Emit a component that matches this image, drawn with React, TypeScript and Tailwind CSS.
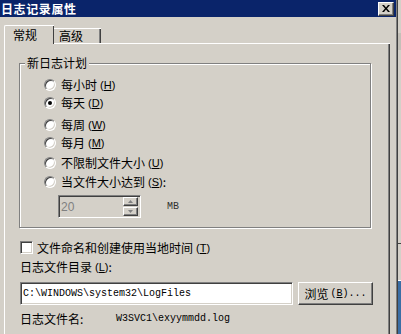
import type { FC, ReactNode } from 'react'

const cjk = { fontFamily: '"Noto Sans CJK SC", "Liberation Sans", sans-serif' }
const mono = { fontFamily: '"Liberation Mono", "Noto Sans CJK SC", monospace' }
const sans = { fontFamily: '"Liberation Sans", sans-serif' }

const Key: FC<{ k: string }> = ({ k }) => (
  <span style={sans} className="text-[11px]">
    (<span className="underline underline-offset-1">{k}</span>)
  </span>
)

const Radio: FC<{ checked?: boolean; children: ReactNode; className?: string }> = ({ checked, children, className }) => (
  <div className={`flex h-[18px] items-center ${className ?? ''}`}>
    <span className="flex h-[12px] w-[12px] items-center justify-center rounded-full border border-b-white border-l-[#808080] border-r-white border-t-[#808080] bg-white shadow-[inset_1px_1px_0_#404040,inset_-1px_-1px_0_#d4d0c8]">
      {checked && <span className="h-[4px] w-[4px] rounded-full bg-black" />}
    </span>
    <span className="ml-[5px] flex items-center gap-[3px] text-[12px] leading-[14px] text-black">{children}</span>
  </div>
)

const App: FC = () => {
  return (
    <div className="flex h-[334px] w-[401px] overflow-hidden bg-[#d4d0c8]" style={cjk}>
      <div className="flex w-[396px] shrink-0 flex-col">
        {/* title bar */}
        <div className="flex h-[17px] items-center justify-between bg-[#0a246a] pl-[1px] pr-[2px]">
          <span className="text-[12px] font-bold leading-[14px] tracking-[0.6px] text-white">日志记录属性</span>
          <div className="flex h-[14px] w-[16px] items-center justify-center border border-b-[#404040] border-l-white border-r-[#404040] border-t-white bg-[#d4d0c8] shadow-[inset_-1px_-1px_0_#808080]">
            <svg width="8" height="7" viewBox="0 0 8 7">
              <path d="M0 0h2l2 2.5 2-2.5h2l-3 3.5 3 3.5h-2l-2-2.5-2 2.5h-2l3-3.5z" fill="#000" />
            </svg>
          </div>
        </div>

        {/* tabs */}
        <div className="ml-[4px] mt-[8px] flex items-end">
          <div className="relative z-10 -mb-px flex h-[19px] w-[50px] items-start rounded-tl-[2px] border-l border-t border-white bg-[#d4d0c8] pl-[8px] pt-[2px] shadow-[inset_-1px_0_0_#404040]">
            <span className="text-[12px] leading-[14px]">常规</span>
          </div>
          <div className="flex h-[15px] w-[47px] items-start border-t border-white pl-[5px] shadow-[inset_-1px_0_0_#404040,inset_-2px_0_0_#808080]">
            <span className="text-[12px] leading-[14px]">高级</span>
          </div>
        </div>

        {/* panel */}
        <div className="ml-[4px] flex w-[386px] flex-1 flex-col border-l border-t border-white pl-[14px] shadow-[inset_-1px_0_0_#404040,inset_-2px_0_0_#808080]">
          <div className="relative mt-[19px] flex h-[165px] w-[352px] flex-col border border-[#808080] pl-[24px] pt-[12px] shadow-[inset_1px_1px_0_#fff,1px_1px_0_#fff]">
            <span className="absolute left-[5px] top-[-8px] bg-[#d4d0c8] px-[2px] text-[12px] leading-[14px]">新日志计划</span>
            <Radio>每小时 <Key k="H" /></Radio>
            <Radio checked>每天 <Key k="D" /></Radio>
            <Radio className="mt-[4px]">每周 <Key k="W" /></Radio>
            <Radio>每月 <Key k="M" /></Radio>
            <Radio className="mt-[2px]">不限制文件大小 <Key k="U" /></Radio>
            <Radio className="mt-[1px]">当文件大小达到 <span className="flex items-center"><Key k="S" />:</span></Radio>
            <div className="ml-[14px] mt-[4px] flex items-center">
              <div className="flex h-[23px] w-[83px] items-center border border-b-white border-l-[#808080] border-r-white border-t-[#808080] shadow-[inset_1px_1px_0_#404040,inset_-1px_-1px_0_#d4d0c8]">
                <span className="ml-[2px] flex-1 text-[12px] leading-[14px] text-[#808080]" style={sans}>
                  20
                </span>
                <div className="mr-[2px] flex flex-col gap-[1px]">
                  {['up', 'down'].map((d) => (
                    <div
                      key={d}
                      className="flex h-[9px] w-[15px] items-center justify-center border border-b-[#404040] border-l-white border-r-[#404040] border-t-white bg-[#d4d0c8] shadow-[inset_-1px_-1px_0_#808080]"
                    >
                      <svg width="5" height="3" viewBox="0 0 5 3">
                        <path d={d === 'up' ? 'M2.5 0L5 3H0z' : 'M0 0h5L2.5 3z'} fill="#808080" />
                      </svg>
                    </div>
                  ))}
                </div>
              </div>
              <span className="ml-[26px] text-[10px] leading-[12px] text-[#303030]" style={mono}>
                MB
              </span>
            </div>
          </div>

          <div className="ml-[1px] mt-[13px] flex h-[13px] items-center">
            <span className="h-[13px] w-[13px] border border-b-white border-l-[#808080] border-r-white border-t-[#808080] bg-white shadow-[inset_1px_1px_0_#404040,inset_-1px_-1px_0_#d4d0c8]" />
            <span className="ml-[4px] flex items-center gap-[3px] text-[12px] leading-[14px]">
              文件命名和创建使用当地时间 <Key k="T" />
            </span>
          </div>

          <div className="ml-[1px] mt-[6px] flex h-[14px] items-center gap-[3px] text-[12px] leading-[14px]">
            日志文件目录 <span className="flex items-center"><Key k="L" />:</span>
          </div>

          <div className="ml-[1px] mt-[8px] flex items-center gap-[5px]">
            <div className="flex h-[23px] w-[273px] items-center border border-b-white border-l-[#808080] border-r-white border-t-[#808080] bg-white pl-[2px] shadow-[inset_1px_1px_0_#404040,inset_-1px_-1px_0_#d4d0c8]">
              <span className="text-[10px] leading-[12px] text-black" style={mono}>
                C:\WINDOWS\system32\LogFiles
              </span>
            </div>
            <div className="flex h-[23px] w-[75px] items-center justify-center gap-[2px] border border-b-[#404040] border-l-white border-r-[#404040] border-t-white bg-[#d4d0c8] shadow-[inset_-1px_-1px_0_#808080]">
              <span className="text-[12px] leading-[14px]">浏览</span>
              <span className="text-[10px]" style={mono}>
                (<span className="underline underline-offset-1">B</span>)...
              </span>
            </div>
          </div>

          <div className="ml-[1px] mt-[7px] flex h-[14px] items-center">
            <span className="w-[96px] text-[12px] leading-[14px]">日志文件名:</span>
            <span className="text-[10px] leading-[12px] text-black" style={mono}>
              W3SVC1\exyymmdd.log
            </span>
          </div>
        </div>
      </div>

      {/* window edge */}
      <div className="w-px shrink-0 bg-[#808080]" />
      <div className="w-px shrink-0 bg-[#404040]" />

      {/* background strip */}
      <div className="flex flex-1 flex-col">
        <div className="h-[33px]" />
        <div className="h-[17px] bg-[#c4c0b8]" />
        <div className="h-[193px]" />
        <div className="h-px bg-[#404040]" />
        <div className="h-[36px]" />
        <div className="h-px bg-white" />
        <div className="flex-1 bg-[#3a6ea5]" />
      </div>
    </div>
  )
}

export default App
